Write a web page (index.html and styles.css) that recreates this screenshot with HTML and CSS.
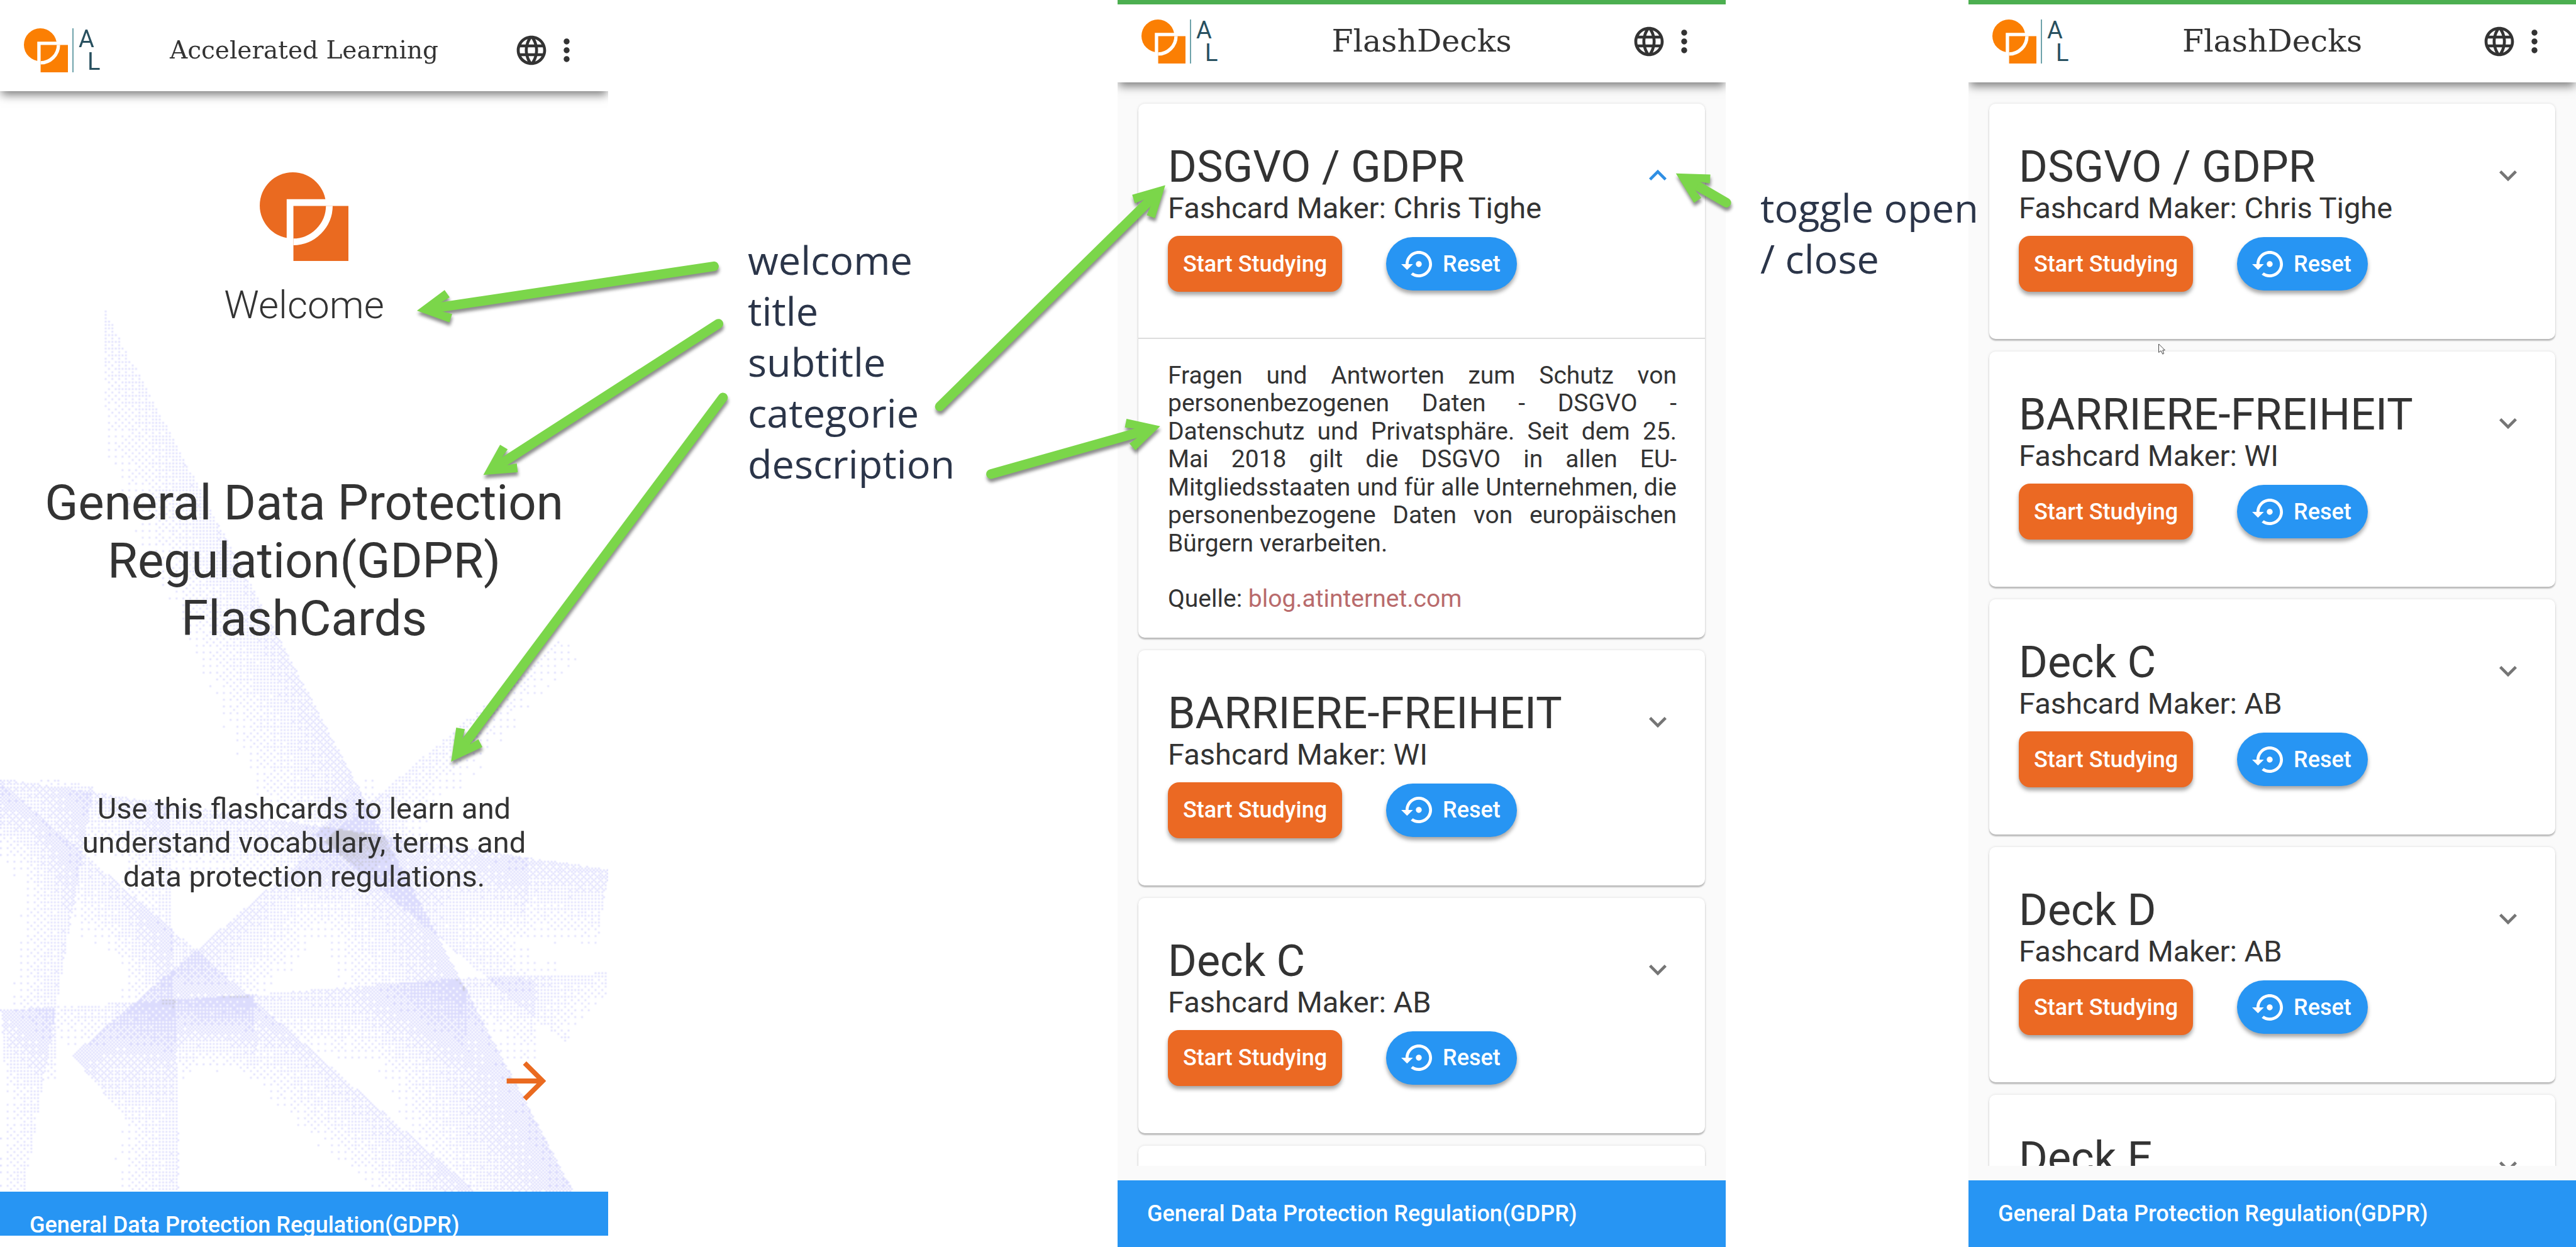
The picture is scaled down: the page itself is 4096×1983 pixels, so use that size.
FILE: index.html
```html
<!DOCTYPE html>
<html lang="en">
<head>
<meta charset="utf-8">
<meta name="viewport" content="width=device-width, initial-scale=1">
<title>Accelerated Learning – FlashDecks</title>
<link rel="stylesheet" href="styles.css">
</head>
<body>
<svg class="sprite" aria-hidden="true">
  <symbol id="mark" viewBox="0 0 158 158">
    <clipPath id="mark-square"><path d="M60 60h98v98H60z"/></clipPath>
    <circle cx="59" cy="59" r="59" fill="currentColor"/>
    <path d="M48 48h110v110H48z" fill="#fff"/>
    <path d="M60 60h98v98H60z" fill="currentColor"/>
    <circle cx="59" cy="59" r="65" fill="none" stroke="#fff" stroke-width="12" clip-path="url(#mark-square)"/>
  </symbol>
  <symbol id="globe" viewBox="0 0 24 24"><path fill="currentColor" d="M11.99 2C6.47 2 2 6.48 2 12s4.47 10 9.99 10C17.52 22 22 17.52 22 12S17.52 2 11.99 2zm6.93 6h-2.95c-.32-1.25-.78-2.45-1.38-3.56 1.84.63 3.37 1.91 4.33 3.56zM12 4.04c.83 1.2 1.48 2.53 1.91 3.96h-3.82c.43-1.43 1.08-2.76 1.91-3.96zM4.26 14C4.1 13.36 4 12.69 4 12s.1-1.36.26-2h3.38c-.08.66-.14 1.32-.14 2s.06 1.34.14 2H4.26zm.82 2h2.95c.32 1.25.78 2.45 1.38 3.56-1.84-.63-3.37-1.9-4.33-3.56zm2.95-8H5.08c.96-1.66 2.49-2.93 4.33-3.56C8.81 5.55 8.35 6.75 8.03 8zM12 19.96c-.83-1.2-1.48-2.53-1.91-3.96h3.82c-.43 1.43-1.08 2.76-1.91 3.96zM14.34 14H9.66c-.09-.66-.16-1.32-.16-2s.07-1.35.16-2h4.68c.09.65.16 1.32.16 2s-.07 1.34-.16 2zm.25 5.56c.6-1.11 1.06-2.31 1.38-3.56h2.95c-.96 1.65-2.49 2.93-4.33 3.56zM16.36 14c.08-.66.14-1.32.14-2s-.06-1.34-.14-2h3.38c.16.64.26 1.31.26 2s-.1 1.36-.26 2h-3.38z"/></symbol>
  <symbol id="more" viewBox="0 0 24 24"><path fill="currentColor" d="M12 8c1.100 0 2-.9 2-2s-.9-2-2-2-2 .9-2 2 .9 2 2 2zm0 2c-1.100 0-2 .9-2 2s.9 2 2 2 2-.9 2-2-.9-2-2-2zm0 6c-1.100 0-2 .9-2 2s.9 2 2 2 2-.9 2-2-.9-2-2-2z"/></symbol>
  <symbol id="expand" viewBox="0 0 24 24"><path fill="currentColor" d="M16.590 8.590L12 13.170 7.410 8.590 6 10l6 6 6-6z"/></symbol>
  <symbol id="collapse" viewBox="0 0 24 24"><path fill="currentColor" d="M12 8l-6 6 1.410 1.410L12 10.830l4.590 4.580L18 14z"/></symbol>
  <symbol id="restore" viewBox="0 0 24 24"><path fill="currentColor" d="M14 12c0-1.100-.9-2-2-2s-2 .9-2 2 .9 2 2 2 2-.9 2-2zm-2-9c-4.970 0-9 4.030-9 9H0l4 4 4-4H5c0-3.870 3.130-7 7-7s7 3.130 7 7-3.130 7-7 7c-1.510 0-2.910-.49-4.060-1.300l-1.420 1.440C8.040 20.300 9.940 21 12 21c4.970 0 9-4.030 9-9s-4.030-9-9-9z"/></symbol>
  <symbol id="forward" viewBox="0 0 24 24"><path fill="currentColor" d="M12 4l-1.410 1.410L16.170 11H4v2h12.170l-5.580 5.590L12 20l8-8z"/></symbol>
</svg>

<div class="board">

  <section class="phone phone-welcome">
    <header class="bar bar-tall">
      <a class="brand" href="#" aria-label="AL home"><svg class="brand-mark"><use href="#mark"/></svg><span class="brand-letters"><span>A</span><span class="brand-l">L</span></span></a>
      <h1 class="bar-title bar-title-small">Accelerated Learning</h1>
      <nav class="bar-actions">
        <button class="icon-button" aria-label="Language"><svg><use href="#globe"/></svg></button>
        <button class="icon-button" aria-label="More"><svg><use href="#more"/></svg></button>
      </nav>
    </header>
    <main class="welcome">
      <canvas class="rays" id="rays" width="360" height="652" aria-hidden="true"></canvas>
      <svg class="hero-mark"><use href="#mark"/></svg>
      <p class="greeting">Welcome</p>
      <h2 class="headline">General Data Protection Regulation(GDPR) FlashCards</h2>
      <p class="lead">Use this flashcards to learn and understand vocabulary, terms and data protection regulations.</p>
      <button class="next" aria-label="Next"><svg><use href="#forward"/></svg></button>
    </main>
    <footer class="foot foot-cut">General Data Protection Regulation(GDPR)</footer>
  </section>

  <aside class="notes notes-fields">
    <ul>
      <li>welcome</li>
      <li>title</li>
      <li>subtitle</li>
      <li>categorie</li>
      <li>description</li>
    </ul>
  </aside>

  <section class="phone">
    <header class="bar bar-loading">
      <a class="brand" href="#" aria-label="AL home"><svg class="brand-mark"><use href="#mark"/></svg><span class="brand-letters"><span>A</span><span class="brand-l">L</span></span></a>
      <h1 class="bar-title">FlashDecks</h1>
      <nav class="bar-actions">
        <button class="icon-button" aria-label="Language"><svg><use href="#globe"/></svg></button>
        <button class="icon-button" aria-label="More"><svg><use href="#more"/></svg></button>
      </nav>
    </header>
    <main class="decks">
      <article class="card">
        <div class="card-head card-head-open">
          <div class="card-info">
            <h2>DSGVO / GDPR</h2>
            <p>Fashcard Maker: Chris Tighe</p>
            <div class="card-actions">
              <button class="study">Start Studying</button>
              <button class="reset"><svg><use href="#restore"/></svg>Reset</button>
            </div>
          </div>
          <button class="toggle toggle-open" aria-expanded="true" aria-label="Close"><svg><use href="#collapse"/></svg></button>
        </div>
        <div class="card-body" lang="de">
          <p>Fragen und Antworten zum Schutz von personenbezogenen Daten - DSGVO - Datenschutz und Privatsphäre. Seit dem 25. Mai 2018 gilt die DSGVO in allen EU-Mitgliedsstaaten und für alle Unternehmen, die personenbezogene Daten von europäischen Bürgern verarbeiten.</p>
          <p>Quelle: <a href="#">blog.atinternet.com</a></p>
        </div>
      </article>
      <article class="card">
        <div class="card-head">
          <div class="card-info">
            <h2>BARRIERE-FREIHEIT</h2>
            <p>Fashcard Maker: WI</p>
            <div class="card-actions">
              <button class="study">Start Studying</button>
              <button class="reset"><svg><use href="#restore"/></svg>Reset</button>
            </div>
          </div>
          <button class="toggle" aria-expanded="false" aria-label="Open"><svg><use href="#expand"/></svg></button>
        </div>
      </article>
      <article class="card">
        <div class="card-head">
          <div class="card-info">
            <h2>Deck C</h2>
            <p>Fashcard Maker: AB</p>
            <div class="card-actions">
              <button class="study">Start Studying</button>
              <button class="reset"><svg><use href="#restore"/></svg>Reset</button>
            </div>
          </div>
          <button class="toggle" aria-expanded="false" aria-label="Open"><svg><use href="#expand"/></svg></button>
        </div>
      </article>
      <article class="card">
        <div class="card-head"></div>
      </article>
    </main>
    <footer class="foot">General Data Protection Regulation(GDPR)</footer>
  </section>

  <aside class="notes notes-toggle">
    <p>toggle open<br>/ close</p>
  </aside>

  <section class="phone">
    <header class="bar bar-loading">
      <a class="brand" href="#" aria-label="AL home"><svg class="brand-mark"><use href="#mark"/></svg><span class="brand-letters"><span>A</span><span class="brand-l">L</span></span></a>
      <h1 class="bar-title">FlashDecks</h1>
      <nav class="bar-actions">
        <button class="icon-button" aria-label="Language"><svg><use href="#globe"/></svg></button>
        <button class="icon-button" aria-label="More"><svg><use href="#more"/></svg></button>
      </nav>
    </header>
    <main class="decks">
      <article class="card">
        <div class="card-head">
          <div class="card-info">
            <h2>DSGVO / GDPR</h2>
            <p>Fashcard Maker: Chris Tighe</p>
            <div class="card-actions">
              <button class="study">Start Studying</button>
              <button class="reset"><svg><use href="#restore"/></svg>Reset</button>
            </div>
          </div>
          <button class="toggle" aria-expanded="false" aria-label="Open"><svg><use href="#expand"/></svg></button>
        </div>
      </article>
      <article class="card">
        <div class="card-head">
          <div class="card-info">
            <h2>BARRIERE-FREIHEIT</h2>
            <p>Fashcard Maker: WI</p>
            <div class="card-actions">
              <button class="study">Start Studying</button>
              <button class="reset"><svg><use href="#restore"/></svg>Reset</button>
            </div>
          </div>
          <button class="toggle" aria-expanded="false" aria-label="Open"><svg><use href="#expand"/></svg></button>
        </div>
      </article>
      <article class="card">
        <div class="card-head">
          <div class="card-info">
            <h2>Deck C</h2>
            <p>Fashcard Maker: AB</p>
            <div class="card-actions">
              <button class="study">Start Studying</button>
              <button class="reset"><svg><use href="#restore"/></svg>Reset</button>
            </div>
          </div>
          <button class="toggle" aria-expanded="false" aria-label="Open"><svg><use href="#expand"/></svg></button>
        </div>
      </article>
      <article class="card">
        <div class="card-head">
          <div class="card-info">
            <h2>Deck D</h2>
            <p>Fashcard Maker: AB</p>
            <div class="card-actions">
              <button class="study">Start Studying</button>
              <button class="reset"><svg><use href="#restore"/></svg>Reset</button>
            </div>
          </div>
          <button class="toggle" aria-expanded="false" aria-label="Open"><svg><use href="#expand"/></svg></button>
        </div>
      </article>
      <article class="card">
        <div class="card-head">
          <div class="card-info">
            <h2>Deck E</h2>
          </div>
          <button class="toggle" aria-expanded="false" aria-label="Open"><svg><use href="#expand"/></svg></button>
        </div>
      </article>
    </main>
    <footer class="foot">General Data Protection Regulation(GDPR)</footer>
  </section>

  <svg class="arrows" viewBox="0 0 4575 2215" aria-hidden="true">
    <defs>
      <marker id="head" markerUnits="userSpaceOnUse" markerWidth="70" markerHeight="70" viewBox="-65 -35 70 70" refX="-40" refY="0" orient="auto">
        <path d="M0 0L-54 -29L-61 -15L-44 -8V8L-61 15L-54 29Z" fill="#7bd64a"/>
      </marker>
    </defs>
    <g class="arrow-lines">
      <path d="M1268 473L780 546" marker-end="url(#head)"/>
      <path d="M1276 575L892 822" marker-end="url(#head)"/>
      <path d="M1284 706L825 1321" marker-end="url(#head)"/>
      <path d="M1669 722L2041 357" marker-end="url(#head)"/>
      <path d="M1760 842L2022 768" marker-end="url(#head)"/>
      <path d="M3066 360L3011 328" marker-end="url(#head)"/>
    </g>
    <path d="M3834 611v15l4-3 3 6 2-1-2-6h4z" fill="#fff" stroke="#333" stroke-width="1"/>
  </svg>
</div>
<script src="rays.js"></script>
</body>
</html>
```

FILE: styles.css
```css
* {
  box-sizing: border-box;
}

body {
  margin: 0;
  background: #fff;
  color: #333;
  font-family: Roboto, "Liberation Sans", sans-serif;
}

h1, h2, p, ul {
  margin: 0;
  padding: 0;
  font-weight: 400;
  list-style: none;
}

button {
  border: 0;
  padding: 0;
  background: none;
  color: inherit;
  font: inherit;
  cursor: pointer;
}

a {
  color: inherit;
  text-decoration: none;
}

svg {
  display: block;
}

.sprite {
  position: absolute;
  width: 0;
  height: 0;
}

.board {
  position: relative;
  display: grid;
  grid-template-columns: 967fr 810fr 967fr 386fr 966fr;
  height: 100vh;
  overflow: hidden;
}

/* phones */

.phone {
  display: flex;
  flex-direction: column;
  min-width: 0;
  min-height: 0;
  overflow: hidden;
  background: #fafafa;
}

.phone-welcome {
  margin-bottom: 18px;
  background: #fff;
}

.bar {
  position: relative;
  z-index: 1;
  flex: none;
  display: grid;
  grid-template-columns: 1fr auto 1fr;
  align-items: center;
  height: 131px;
  padding: 0 38px;
  background: #fff;
  box-shadow: 0 8px 14px -2px rgba(0, 0, 0, 0.5);
}

.bar-tall {
  height: 145px;
  padding-top: 14px;
}

.bar-loading::before {
  content: "";
  position: absolute;
  inset: 0 0 auto;
  height: 7px;
  background: #4caf50;
}

.brand {
  display: flex;
  align-items: center;
  gap: 7px;
}

.brand-mark {
  width: 70px;
  height: 70px;
  color: #fb7f03;
}

.brand-letters {
  display: flex;
  flex-direction: column;
  justify-content: space-between;
  height: 70px;
  padding-left: 8px;
  border-left: 2px solid #6fa3ab;
  color: #28505f;
  font-size: 38px;
  line-height: 34px;
}

.brand-l {
  padding-left: 14px;
}

.bar-title {
  font-family: "DejaVu Serif", "Liberation Serif", serif;
  font-size: 49px;
  line-height: 56px;
}

.bar-title-small {
  font-size: 39px;
}

.bar-actions {
  display: flex;
  justify-content: flex-end;
}

.icon-button,
.icon-button svg,
.toggle,
.toggle svg {
  width: 56px;
  height: 56px;
}

.foot {
  flex: none;
  padding: 32px 47px;
  background: #2795f3;
  color: #fff;
  font-size: 36px;
  font-weight: 500;
  line-height: 42px;
}

.foot-cut {
  height: 70px;
  overflow: hidden;
}

/* welcome page */

.welcome {
  position: relative;
  flex: 1;
  display: flex;
  flex-direction: column;
  align-items: center;
  min-height: 0;
  padding: 129px 47px;
  text-align: center;
}

.rays {
  position: absolute;
  inset: 0;
  width: 100%;
  height: 100%;
}

.welcome > :not(.rays) {
  position: relative;
}

.hero-mark {
  flex: none;
  width: 141px;
  height: 141px;
  color: #ea6a20;
}

.greeting {
  margin-top: 35px;
  font-size: 62px;
  font-weight: 300;
  line-height: 70px;
}

.headline {
  margin-top: 234px;
  font-size: 78px;
  line-height: 92px;
}

.lead {
  margin-top: 229px;
  padding: 0 47px;
  font-size: 47px;
  line-height: 54px;
}

.next {
  align-self: flex-end;
  margin: auto 36px 0 0;
  color: #ea6a20;
}

.next svg {
  width: 94px;
  height: 94px;
}

/* deck list */

.decks {
  flex: 1;
  display: flex;
  flex-direction: column;
  gap: 20px;
  min-height: 0;
  margin-bottom: 23px;
  padding: 34px 33px 0;
  overflow: hidden;
}

.card {
  flex: none;
  border-radius: 10px;
  background: #fff;
  box-shadow: 0 3px 2px rgba(0, 0, 0, 0.22), 0 0 4px rgba(0, 0, 0, 0.12);
}

.card-head {
  display: flex;
  justify-content: space-between;
  min-height: 374px;
  padding: 60px 47px 75px;
}

.card-head-open {
  border-bottom: 2px solid #dcdcdc;
  padding-bottom: 73px;
}

.card-info h2 {
  font-size: 70px;
  line-height: 80px;
}

.card-info p {
  font-size: 47px;
  line-height: 52px;
}

.card-actions {
  display: flex;
  align-items: center;
  gap: 70px;
  margin-top: 18px;
  color: #fff;
  font-size: 36px;
  font-weight: 500;
}

.study,
.reset {
  box-shadow: 0 5px 6px rgba(0, 0, 0, 0.35);
}

.study {
  height: 89px;
  padding: 0 24px;
  border-radius: 18px;
  background: #eb6923;
}

.reset {
  display: flex;
  align-items: center;
  gap: 10px;
  height: 85px;
  padding: 0 26px 0 24px;
  border-radius: 43px;
  background: #2795f3;
}

.reset svg {
  width: 56px;
  height: 56px;
}

.toggle {
  margin-top: 26px;
  color: #757575;
}

.toggle-open {
  color: #2f8fe4;
}

.card-body {
  padding: 36px 45px 39px 47px;
  font-size: 39px;
  line-height: 1.14;
  text-align: justify;
}

.card-body p + p {
  margin-top: 44px;
}

.card-body a {
  color: #b96b6c;
}

/* notes beside the phones */

.notes {
  position: relative;
  z-index: 2;
  min-width: 0;
  color: #2b3549;
  font-family: "Open Sans", "Noto Sans", sans-serif;
  font-size: 63px;
  line-height: 81px;
  white-space: nowrap;
}

.notes-fields {
  padding: 372px 0 0 222px;
}

.notes-toggle {
  padding: 289px 0 0 55px;
}

.arrows {
  position: absolute;
  inset: 0;
  z-index: 3;
  width: 100%;
  height: 100%;
  pointer-events: none;
}

.arrow-lines {
  fill: none;
  stroke: #7bd64a;
  stroke-width: 17;
  stroke-linecap: round;
  filter: drop-shadow(1px 6px 3px rgba(0, 0, 0, 0.45));
}
```

FILE: rays.js
```js
// Draws the dotted light rays behind the welcome text.
// Each ray has one sharp edge (x1,y1)-(x2,y2) and fades out on one side
// of it. `reach` and `density` run from the start of the edge to its end;
// the summed density is dithered into dots.
const rays = [
  { x1: 186, y1: 390, x2: 1020, y2: 1960, side: 1, reach: [120, 230], density: [0.2, 0.62], minX: 186 },
  { x1: 0, y1: 1220, x2: 1080, y2: 1382, side: 1, reach: [110, 150], density: [0.34, 0.45] },
  { x1: 1000, y1: 969, x2: 126, y2: 1712, side: -1, reach: [50, 190], density: [0.1, 0.55] },
  { x1: 0, y1: 1226, x2: 850, y2: 1960, side: 1, reach: [110, 130], density: [0.34, 0.4] },
  { x1: 0, y1: 1632, x2: 94, y2: 1626, side: 1, reach: [150, 150], density: [0.5, 0.5] },
  { x1: 94, y1: 1626, x2: 449, y2: 1604, side: 1, reach: [80, 150], density: [0.15, 0.6] },
  { x1: 449, y1: 1604, x2: 821, y2: 1575, side: 1, reach: [110, 170], density: [0.3, 0.5] },
  { x1: 821, y1: 1575, x2: 1080, y2: 1565, side: 1, reach: [110, 60], density: [0.3, 0.25] },
  { x1: 300, y1: 1262, x2: 318, y2: 1955, side: 1, reach: [90, 120], density: [0.24, 0.3] },
  { x1: 165, y1: 1234, x2: 42, y2: 1955, side: 1, reach: [110, 60], density: [0.36, 0.2] },
  { x1: 933, y1: 1361, x2: 933, y2: 1504, side: 1, reach: [200, 40], density: [0.2, 0.1] },
  { x1: 947, y1: 1575, x2: 950, y2: 1720, side: 1, reach: [120, 80], density: [0.22, 0.1] },
  { x1: 560, y1: 1320, x2: 1000, y2: 1690, side: -1, reach: [150, 90], density: [0.45, 0.15] }
];

const bayer = [
  [0, 8, 2, 10],
  [12, 4, 14, 6],
  [3, 11, 1, 9],
  [15, 7, 13, 5]
];

const canvas = document.getElementById("rays");
const ctx = canvas.getContext("2d");
const image = ctx.createImageData(canvas.width, canvas.height);

let seed = 7;
function random() {
  seed = (seed * 16807) % 2147483647;
  return seed / 2147483647;
}

function mix(range, t) {
  return range[0] + (range[1] - range[0]) * t;
}

function density(x, y) {
  let total = 0;
  for (const r of rays) {
    const dx = r.x2 - r.x1;
    const dy = r.y2 - r.y1;
    const length = Math.hypot(dx, dy);
    const along = ((x - r.x1) * dx + (y - r.y1) * dy) / (length * length);
    const away = r.side * ((y - r.y1) * dx - (x - r.x1) * dy) / length;
    if (along < 0 || along > 1 || away < 0 || x < (r.minX || 0)) continue;
    const reach = mix(r.reach, along);
    if (away > reach) continue;
    total += mix(r.density, along) * (1 - away / reach);
  }
  return total;
}

for (let j = 0; j < canvas.height; j++) {
  for (let i = 0; i < canvas.width; i++) {
    const value = density(i * 3, j * 3);
    const limit = (bayer[j % 4][i % 4] + 0.5) / 16 + (random() - 0.5) * 0.06;
    if (value <= limit) continue;
    const p = (j * canvas.width + i) * 4;
    const dark = value > 0.95 + limit * 0.3;
    image.data[p] = dark ? 190 : 212;
    image.data[p + 1] = dark ? 190 : 212;
    image.data[p + 2] = dark ? 206 : 252;
    image.data[p + 3] = 210;
  }
}
ctx.putImageData(image, 0, 0);
```
